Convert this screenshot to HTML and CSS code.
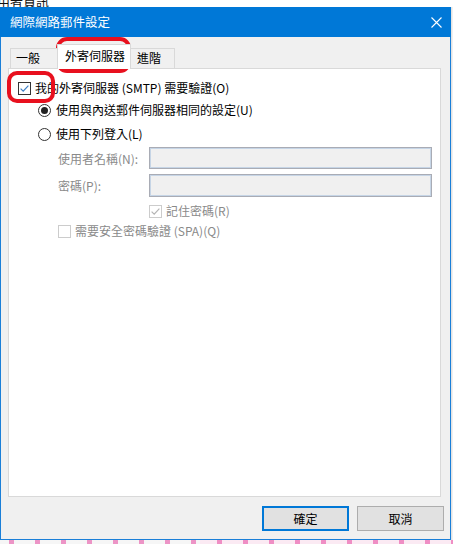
FILE: index.html
```html
<!DOCTYPE html>
<html lang="zh-Hant">
<head>
<meta charset="utf-8">
<title>網際網路郵件設定</title>
<link rel="stylesheet" href="styles.css">
</head>
<body>
<div class="backdrop-top"><span class="backdrop-text">用者資訊</span></div>
<div class="stage">
  <div class="dialog">
    <div class="titlebar">
      <span class="title">網際網路郵件設定</span>
      <svg class="close" width="11" height="11" viewBox="0 0 11 11"><path d="M0.5 0.5 L10.5 10.5 M10.5 0.5 L0.5 10.5" stroke="#fff" stroke-width="1.1" fill="none"/></svg>
    </div>
    <div class="dialog-body">
      <div class="tabs">
        <div class="tab tab-general">一般</div>
        <div class="tab tab-active">外寄伺服器</div>
        <div class="tab tab-advanced">進階</div>
      </div>
      <div class="panel">
        <div class="row row-auth">
          <svg class="box" width="13" height="13" viewBox="0 0 13 13"><rect x="0.5" y="0.5" width="12" height="12" fill="#fff" stroke="#333"/><path d="M2.6 6.6 L5.2 9.2 L10.4 3.6" stroke="#3c7fc6" stroke-width="1.2" fill="none"/></svg>
          <span class="label">我的外寄伺服器 (SMTP) 需要驗證(O)</span>
        </div>
        <div class="row row-radio1">
          <span class="radio radio-on"><span class="dot"></span></span>
          <span class="label">使用與內送郵件伺服器相同的設定(U)</span>
        </div>
        <div class="row row-radio2">
          <span class="radio"></span>
          <span class="label">使用下列登入(L)</span>
        </div>
        <div class="field row-user">
          <span class="field-label">使用者名稱(N):</span>
          <span class="input"></span>
        </div>
        <div class="field row-pass">
          <span class="field-label">密碼(P):</span>
          <span class="input"></span>
        </div>
        <div class="row row-remember">
          <svg class="box" width="13" height="13" viewBox="0 0 13 13"><rect x="0.5" y="0.5" width="12" height="12" fill="#fff" stroke="#cccccc"/><path d="M2.6 6.6 L5.2 9.2 L10.4 3.6" stroke="#b4b4b4" stroke-width="1.2" fill="none"/></svg>
          <span class="label disabled">記住密碼(R)</span>
        </div>
        <div class="row row-spa">
          <svg class="box" width="13" height="13" viewBox="0 0 13 13"><rect x="0.5" y="0.5" width="12" height="12" fill="#fff" stroke="#cccccc"/></svg>
          <span class="label disabled">需要安全密碼驗證 (SPA)(Q)</span>
        </div>
      </div>
      <div class="buttons">
        <div class="btn btn-default">確定</div>
        <div class="btn">取消</div>
      </div>
    </div>
  </div>
  <div class="side-strip"></div>
</div>
<div class="backdrop-bottom"></div>
<div class="mark mark-tab"></div>
<div class="mark mark-check"></div>
</body>
</html>
```
FILE: styles.css
```css
html, body {
  margin: 0;
  padding: 0;
}
body {
  width: 453px;
  height: 544px;
  overflow: hidden;
  position: relative;
  background: #f4f4f4;
  font-family: "Noto Sans CJK TC", "Noto Sans", sans-serif;
  font-size: 12px;
  color: #000;
}
.backdrop-top {
  height: 7px;
  overflow: hidden;
  background: #fff;
}
.backdrop-text {
  display: block;
  margin-top: -6px;
  margin-left: -3px;
  font-size: 13px;
  line-height: 14px;
  color: #111;
}
.stage {
  display: flex;
}
.side-strip {
  flex: 1;
  background: #f0f0f0;
  border-left: 1px solid #e3e3e3;
}
.dialog {
  width: 451px;
  height: 533px;
  box-sizing: border-box;
  border: 1px solid #1a7fd8;
  border-top: none;
  background: #f0f0f0;
  display: flex;
  flex-direction: column;
}
.titlebar {
  height: 30px;
  margin: 0 -1px;
  background: #0078d7;
  color: #fff;
  display: flex;
  align-items: center;
  justify-content: space-between;
  padding: 0 10px 0 10px;
  font-size: 12.5px;
}
.title {
  line-height: 16px;
}
.close {
  display: block;
  margin-right: -1px;
}
.dialog-body {
  flex: 1;
  padding: 0 9px 0 7px;
  display: flex;
  flex-direction: column;
}
.tabs {
  height: 31px;
  display: flex;
  align-items: flex-end;
  padding-left: 2px;
  position: relative;
  z-index: 1;
}
.tab {
  box-sizing: border-box;
  height: 20px;
  border: 1px solid #d9d9d9;
  border-bottom: none;
  background: #f0f0f0;
  line-height: 18px;
  padding-left: 5px;
}
.tab-general {
  width: 48px;
}
.tab-active {
  width: 74px;
  padding-left: 7px;
  background: #fff;
  margin-bottom: -1px;
  height: 25px;
  line-height: 22px;
  margin-left: -1px;
  margin-right: -1px;
}
.tab-advanced {
  width: 45px;
  padding-left: 6px;
}
.panel {
  height: 429px;
  box-sizing: border-box;
  border: 1px solid #d9d9d9;
  background: #fff;
  padding: 8px 8px 0 9px;
}
.row {
  display: flex;
  align-items: center;
  height: 22px;
}
.box {
  display: block;
  flex: none;
}
.label {
  margin-left: 4px;
  line-height: 16px;
  white-space: nowrap;
}
.disabled {
  color: #8a8a8a;
}
.row-radio1 {
  margin-left: 20px;
}
.row-radio1 .label,
.row-radio2 .label {
  margin-left: 5px;
}
.row-radio2 {
  margin-left: 20px;
  margin-top: 2px;
}
.radio {
  box-sizing: border-box;
  width: 13px;
  height: 13px;
  border: 1px solid #333;
  border-radius: 50%;
  background: #fff;
  display: flex;
  align-items: center;
  justify-content: center;
  flex: none;
}
.dot {
  width: 7px;
  height: 7px;
  border-radius: 50%;
  background: #222;
}
.field {
  display: flex;
  align-items: center;
  margin-left: 40px;
}
.row-user {
  margin-top: 2px;
}
.row-pass {
  margin-top: 5px;
}
.field-label {
  width: 91px;
  flex: none;
  color: #8a8a8a;
  white-space: nowrap;
}
.input {
  box-sizing: border-box;
  width: 283px;
  height: 22px;
  background: #f0f0f0;
  border: 1px solid #a9acb5;
  box-shadow: inset 0 0 0 1px #c6d5e6;
}
.row-pass .input {
  height: 23px;
}
.row-remember {
  margin-left: 131px;
  height: 20px;
  margin-top: 4px;
}
.row-spa {
  margin-left: 40px;
  height: 20px;
}
.buttons {
  display: flex;
  justify-content: flex-end;
  gap: 8px;
  margin-top: 9px;
  margin-right: -3px;
}
.btn {
  box-sizing: border-box;
  width: 87px;
  height: 25px;
  background: #e1e1e1;
  border: 1px solid #adadad;
  display: flex;
  align-items: center;
  justify-content: center;
  line-height: 16px;
}
.btn-default {
  border: 2px solid #0078d7;
}
.backdrop-bottom {
  height: 4px;
  background:
    repeating-linear-gradient(90deg, transparent 0 9px, rgba(225, 30, 140, 0.45) 9px 14px, transparent 14px 26px),
    linear-gradient(90deg, #f6f6f6 0 200px, #fbeaf3 200px);
}
.mark {
  position: absolute;
  box-sizing: border-box;
  border: 4px solid #e8101e;
  pointer-events: none;
}
.mark-tab {
  left: 56px;
  top: 37px;
  width: 75px;
  height: 36px;
  border-radius: 11px;
}
.mark-check {
  left: 7px;
  top: 71px;
  width: 48px;
  height: 32px;
  border-radius: 10px;
}
```
